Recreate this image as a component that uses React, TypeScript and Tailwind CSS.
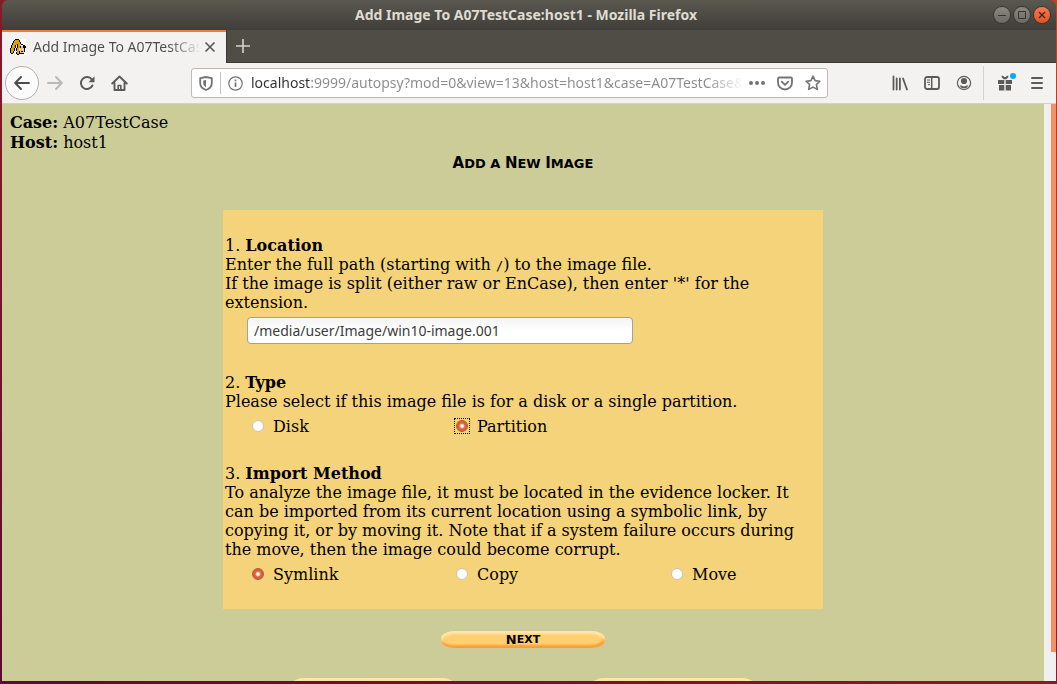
import { useState } from "react";
import type { ReactNode } from "react";

const ui = "font-['Noto_Sans',sans-serif]";

function HoundIcon() {
  return (
    <svg width="16" height="16" viewBox="0 0 16 16" shapeRendering="crispEdges" className="shrink-0" aria-hidden="true">
      <path fill="#fff" d="M10 0h6v16h-6z" />
      <path
        fill="#000"
        d="M5 0h4v1H5zM4 1h1v1H4zM9 1h1v2H9zM3 2h1v2H3zM2 4h1v2H2zM1 6h1v3H1zM0 9h1v5H0zM1 14h2v1H1zM3 12h1v2H3zM4 9h1v3H4zM5 6h1v3H5zM6 13h1v2H6zM7 15h2v1H7zM10 3h1v2h-1zM11 5h2v1h-2zM13 6h2v1h-2zM15 7h1v2h-1zM13 7h2v2h-2zM14 9h1v4h-1zM9 14h5v1H9zM7 5h1v4H7zM6 9h1v3H6zM9 12h1v2H9z"
      />
      <path
        fill="#d9a400"
        d="M5 1h4v2H5zM4 2h2v4H4zM3 4h2v5H3zM2 6h3v3H2zM1 9h3v3H1zM1 12h2v2H1zM6 3h4v2H6zM8 5h2v5H8zM7 9h2v6H7zM5 4h2v2H5z"
      />
      <path fill="#e9c9a0" d="M10 7h3v2h-3zM9 9h5v3H9zM10 12h4v2h-4zM10 5h1v2h-1z" />
      <path fill="#000" d="M10 7h1v2h-1zM11 12h2v1h-2z" />
    </svg>
  );
}

function IconButton({ label, className = "", children }: { label: string; className?: string; children: ReactNode }) {
  return (
    <button type="button" aria-label={label} className={`flex h-8 w-8 shrink-0 items-center justify-center text-[#5c5b5a] ${className}`}>
      {children}
    </button>
  );
}

function TitleBar() {
  return (
    <header className="grid h-[30px] shrink-0 grid-cols-[1fr_auto_1fr] items-center rounded-t-md bg-linear-to-b from-[#5b5850] to-[#403e39] pr-1.5">
      <span />
      <h1 className={`${ui} text-sm font-bold text-[#dfdbd2]`}>Add Image To A07TestCase:host1 - Mozilla Firefox</h1>
      <div className="flex justify-end gap-1">
        <button type="button" aria-label="Minimize" className="h-4 w-4 rounded-full bg-linear-to-b from-[#8a8880] to-[#6b6963] text-[#34332e] ring-1 ring-[#37352f]">
          <svg viewBox="0 0 16 16" stroke="currentColor"><path d="M4 8.500h8" /></svg>
        </button>
        <button type="button" aria-label="Maximize" className="h-4 w-4 rounded-full bg-linear-to-b from-[#8a8880] to-[#6b6963] text-[#34332e] ring-1 ring-[#37352f]">
          <svg viewBox="0 0 16 16" fill="none" stroke="currentColor"><path d="M4.500 4.500h7v7h-7z" /></svg>
        </button>
        <button type="button" aria-label="Close window" className="h-4 w-4 rounded-full bg-linear-to-b from-[#f57a50] to-[#e6511d] text-[#3c2418] ring-1 ring-[#37352f]">
          <svg viewBox="0 0 16 16" stroke="currentColor" strokeWidth="1.3"><path d="M5 5l6 6M11 5l-6 6" /></svg>
        </button>
      </div>
    </header>
  );
}

function TabBar() {
  return (
    <div className="flex h-[33px] shrink-0 bg-[#504d46]">
      <div className="flex w-56 items-center border-t-2 border-[#f07746] bg-[#f3f2f1] pr-2 pb-0.5 pl-2">
        <HoundIcon />
        <span className={`${ui} ml-[7px] w-[166px] overflow-hidden bg-[linear-gradient(to_right,#4c4c4c_136px,transparent_168px)] bg-clip-text text-sm whitespace-nowrap text-transparent`}>
          Add Image To A07TestCase:host1
        </span>
        <button type="button" aria-label="Close tab" className="ml-[3px] flex h-4 w-4 shrink-0 items-center justify-center text-[#555]">
          <svg width="12" height="12" viewBox="0 0 12 12" stroke="currentColor" strokeWidth="1.600"><path d="M1.500 1.500l9 9M10.500 1.500l-9 9" /></svg>
        </button>
      </div>
      <button type="button" aria-label="New tab" className="flex w-8 items-center justify-center border-b border-l border-[#3a3833] text-[#d5d2ca]">
        <svg width="16" height="16" viewBox="0 0 16 16" stroke="currentColor" strokeWidth="1.600"><path d="M8 1v14M1 8h14" /></svg>
      </button>
      <div className="flex-1 border-b border-[#3a3833]" />
    </div>
  );
}

function NavBar() {
  return (
    <nav className="flex h-[41px] shrink-0 items-center border-b border-[#d3d1ce] bg-[#f3f2f1] pr-[3px]">
      <button type="button" aria-label="Back" className="ml-[3px] flex h-[34px] w-[34px] shrink-0 items-center justify-center rounded-full border border-[#b1b0ae] bg-[#fbfbfb] text-[#4c4c4c]">
        <svg width="16" height="16" viewBox="0 0 16 16" fill="none" stroke="currentColor" strokeWidth="1.900" strokeLinecap="round" strokeLinejoin="round"><path d="M15 8H1.500M7 2L1.200 8 7 14" /></svg>
      </button>
      <IconButton label="Forward" className="text-[#b9b8b7]!">
        <svg width="16" height="16" viewBox="0 0 16 16" fill="none" stroke="currentColor" strokeWidth="1.900" strokeLinecap="round" strokeLinejoin="round"><path d="M1 8h13.500M9 2l5.800 6L9 14" /></svg>
      </IconButton>
      <IconButton label="Reload">
        <svg width="16" height="16" viewBox="0 0 16 16" fill="none" stroke="currentColor" strokeWidth="2" strokeLinecap="round"><path d="M13.400 10.500a6 6 0 1 1-.6-6" /><path d="M15.500 1.200v6H9.500z" fill="currentColor" stroke="none" /></svg>
      </IconButton>
      <IconButton label="Home">
        <svg width="17" height="16" viewBox="0 0 17 16" fill="none" stroke="currentColor" strokeWidth="1.900" strokeLinecap="round" strokeLinejoin="round"><path d="M1.200 8.500l7.300-7 7.300 7M3.500 8v7h10V8" /><path d="M7.200 15v-4.500h2.600V15" strokeWidth="1.600" /></svg>
      </IconButton>

      <div className="ml-14 flex h-[30px] max-w-[637px] min-w-0 flex-1 items-center rounded-[3px] border border-[#bcbab8] bg-white text-[#737373]">
        <button type="button" aria-label="Tracking protection" className="flex w-7 shrink-0 justify-center">
          <svg width="14" height="15" viewBox="0 0 14 15" fill="none" stroke="currentColor" strokeWidth="1.800" strokeLinejoin="round"><path d="M7 1L1.200 2.200V7c0 3.500 2.300 5.800 5.800 7 3.500-1.200 5.800-3.500 5.800-7V2.200z" /><path d="M7 4L4.200 4.500V7c0 2 1 3.200 2.800 4.200z" fill="currentColor" stroke="none" /></svg>
        </button>
        <span className="h-[22px] w-px shrink-0 bg-[#c4c3c2]" />
        <button type="button" aria-label="Site information" className="flex w-7 shrink-0 justify-center">
          <svg width="15" height="15" viewBox="0 0 15 15" fill="none" stroke="currentColor"><circle cx="7.500" cy="7.500" r="6.700" strokeWidth="1.200" /><path d="M7.500 6.500V11M7.500 3.500v1.800" strokeWidth="1.700" /></svg>
        </button>
        <input
          aria-label="Address"
          readOnly
          value="localhost:9999/autopsy?mod=0&view=13&host=host1&case=A07TestCase&inv=unknown"
          className={`${ui} ml-0.5 min-w-0 flex-1 bg-[linear-gradient(to_right,#303030_60px,#8b8b8b_60px,#8b8b8b_calc(100%-36px),transparent)] bg-clip-text text-sm text-transparent outline-none`}
        />
        <button type="button" aria-label="Page actions" className="flex w-7 shrink-0 justify-center">
          <svg width="16" height="6" viewBox="0 0 16 6" fill="currentColor"><circle cx="2" cy="3" r="2" /><circle cx="8" cy="3" r="2" /><circle cx="14" cy="3" r="2" /></svg>
        </button>
        <button type="button" aria-label="Save to Pocket" className="flex w-7 shrink-0 justify-center">
          <svg width="16" height="15" viewBox="0 0 16 15" fill="none" stroke="currentColor" strokeWidth="1.800" strokeLinecap="round" strokeLinejoin="round"><path d="M2.200 1.500h11.600q1.200 0 1.200 1.200V6.500a7 7 0 0 1-14 0V2.700q0-1.200 1.200-1.200z" /><path d="M4.700 5.700L8 8.800l3.300-3.100" /></svg>
        </button>
        <button type="button" aria-label="Bookmark" className="flex w-7 shrink-0 justify-center">
          <svg width="16" height="16" viewBox="0 0 16 16" fill="none" stroke="currentColor" strokeWidth="1.600" strokeLinejoin="round"><path d="M8 1.200l2.100 4.400 4.800.6-3.500 3.300.9 4.900L8 12.100l-4.300 2.300.9-4.900L1.100 6.200l4.800-.6z" /></svg>
        </button>
      </div>

      <div className="ml-auto flex items-center">
        <IconButton label="Library">
          <svg width="16" height="16" viewBox="0 0 16 16" stroke="currentColor" strokeWidth="1.800" strokeLinecap="round"><path d="M1.500 1.500v13M4.700 3.500v11M7.900 3.500v11M11 3.500l4 11" /></svg>
        </IconButton>
        <IconButton label="Sidebars">
          <svg width="16" height="14" viewBox="0 0 16 14" fill="none" stroke="currentColor" strokeWidth="1.800"><rect x="1" y="1" width="14" height="12" rx="2" /><path d="M7.700 1v12" strokeWidth="1.500" /><path d="M3 4h3M3 6.300h3M4 8.600h2" strokeWidth="1" /></svg>
        </IconButton>
        <IconButton label="Account">
          <svg width="16" height="16" viewBox="0 0 16 16"><circle cx="8" cy="8" r="6.600" fill="none" stroke="currentColor" strokeWidth="1.200" /><circle cx="8" cy="6" r="3.100" fill="currentColor" /><path d="M3.500 10.500h1.900a4.500 4.500 0 0 0 5.200 0h1.900a5 5 0 0 1-9 0z" fill="currentColor" /></svg>
        </IconButton>
        <span className="mr-[5px] ml-[3px] h-[34px] w-px bg-[#d3d2d0]" />
        <IconButton label="What's new" className="relative">
          <svg width="16" height="16" viewBox="0 0 16 16" fill="currentColor"><path d="M1 5h6.300v4H1zM8.700 5H15v4H8.700zM2 10h5.300v5.500H2zM8.700 10H14v5.500H8.700zM4.700.5q1.800.2 2.600 1.500h1.400q.8-1.300 2.600-1.500v1.800L9.300 4.200H6.700L4.700 2.300z" /></svg>
          <span className="absolute top-1.5 right-[5px] h-1.5 w-1.5 rounded-full bg-[#00a8ff]" />
        </IconButton>
        <IconButton label="Menu">
          <svg width="14" height="14" viewBox="0 0 14 14" stroke="currentColor" strokeWidth="2" strokeLinecap="round"><path d="M2 2h10M2 7h10M2 12h10" /></svg>
        </IconButton>
      </div>
    </nav>
  );
}

function Choice({ name, value, selected, onSelect }: { name: string; value: string; selected: string; onSelect: (v: string) => void }) {
  return (
    <label className="flex items-center gap-[9px]">
      <span className={`flex ${name === "type" ? "has-checked:outline has-checked:outline-offset-1 has-checked:outline-dotted has-checked:outline-black" : ""}`}>
        <input
          type="radio"
          name={name}
          value={value}
          checked={selected === value}
          onChange={() => onSelect(value)}
          className="h-3 w-3 appearance-none rounded-full border border-[#c9c3b6] bg-white outline-none checked:border-[#b5552f] checked:bg-[radial-gradient(circle,#fff_1px,#d9623a_3px)]"
        />
      </span>
      {value}
    </label>
  );
}

function PillButton({ label, children }: { label: string; children?: ReactNode }) {
  return (
    <button
      type="button"
      aria-label={label}
      className="flex h-[17px] w-[164px] items-center justify-center rounded-[14px/8px] bg-[#ffd070] font-['DejaVu_Sans',sans-serif] text-[11px] leading-none font-bold text-black uppercase shadow-[inset_0_3px_2px_#ffe6b0,inset_-1px_-3px_2px_#ff9c38]"
    >
      {children}
    </button>
  );
}

function AddImagePage() {
  const [path, setPath] = useState("/media/user/Image/win10-image.001");
  const [type, setType] = useState("Partition");
  const [method, setMethod] = useState("Symlink");
  const columns = "grid h-6 grid-cols-[204px_215px_1fr] items-center pl-[27px]";
  const capital = "text-[15px]";

  return (
    <main className="min-w-0 flex-1 overflow-hidden bg-[#cccc99] font-['DejaVu_Serif',serif] text-base leading-[19px] text-black">
      <div className="px-2 pt-[9px] leading-5">
        <p><b>Case:</b> A07TestCase</p>
        <p><b>Host:</b> host1</p>
      </div>
      <h2 className="h-5 text-center font-['DejaVu_Sans',sans-serif] text-[13px] leading-5 font-bold uppercase">
        <span className={capital}>A</span>dd a <span className={capital}>N</span>ew <span className={capital}>I</span>mage
      </h2>
      <form className="mx-auto mt-[37px] max-w-[600px]" onSubmit={(e) => e.preventDefault()}>
        <div className="bg-[#f5d37a] px-0.5 pt-[26px] pb-[23px]">
          <section>
            <p>1. <label htmlFor="path" className="font-bold">Location</label></p>
            <p>Enter the full path (starting with <code className="font-['DejaVu_Sans_Mono',monospace] text-xs leading-none">/</code>) to the image file.</p>
            <p>If the image is split (either raw or EnCase), then enter '*' for the extension.</p>
            <input
              id="path"
              type="text"
              value={path}
              onChange={(e) => setPath(e.target.value)}
              className={`${ui} mt-[5px] ml-[22px] block h-[27px] w-[386px] max-w-full rounded-[4px] border border-[#a5a19a] bg-linear-to-b from-[#f3f3f3] to-white to-50% px-1.5 text-sm text-[#3c3c3c] outline-none`}
            />
          </section>
          <section className="mt-[29px]">
            <p>2. <b>Type</b></p>
            <p>Please select if this image file is for a disk or a single partition.</p>
            <div role="radiogroup" aria-label="Type" className={`${columns} mt-[3px]`}>
              <Choice name="type" value="Disk" selected={type} onSelect={setType} />
              <Choice name="type" value="Partition" selected={type} onSelect={setType} />
            </div>
          </section>
          <section className="mt-[26px]">
            <p>3. <b>Import Method</b></p>
            <p>
              To analyze the image file, it must be located in the evidence locker. It can be imported from its current
              location using a symbolic link, by copying it, or by moving it. Note that if a system failure occurs during
              the move, then the image could become corrupt.
            </p>
            <div role="radiogroup" aria-label="Import Method" className={`${columns} mt-[3px]`}>
              <Choice name="method" value="Symlink" selected={method} onSelect={setMethod} />
              <Choice name="method" value="Copy" selected={method} onSelect={setMethod} />
              <Choice name="method" value="Move" selected={method} onSelect={setMethod} />
            </div>
          </section>
        </div>
        <div className="mt-[22px] flex justify-center">
          <PillButton label="Next"><span className="text-[13px]">N</span>ext</PillButton>
        </div>
        <div className="mt-[30px] grid grid-cols-2 justify-items-center">
          <PillButton label="Cancel" />
          <PillButton label="Help" />
        </div>
      </form>
    </main>
  );
}

export default function App() {
  return (
    <div className="h-screen bg-[linear-gradient(to_top_right,#5a0c32,#8a1a26,#c8401c)] pr-px pb-[3px] pl-0.5">
      <div className="flex h-full flex-col overflow-hidden">
        <TitleBar />
        <TabBar />
        <NavBar />
        <div className="flex min-h-0 flex-1">
          <AddImagePage />
          <div className="flex w-3 shrink-0 flex-col items-end bg-[#f1f0ef]">
            <div className="h-[95%] w-[5px] bg-[#f29168]" />
          </div>
        </div>
      </div>
    </div>
  );
}
